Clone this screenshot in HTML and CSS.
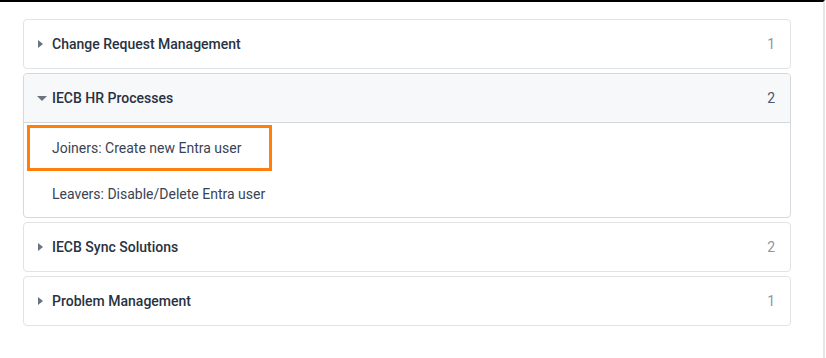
FILE: index.html
```html
<!DOCTYPE html>
<html lang="en">
<head>
    <meta charset="UTF-8">
    <meta name="viewport" content="width=device-width, initial-scale=1.0">
    <title>Service Catalog</title>
    <link rel="stylesheet" href="styles.css">
</head>
<body>
    <div class="frame">
        <div class="catalog">
            <div class="group">
                <div class="group-head">
                    <span class="caret caret-right"></span>
                    <span class="group-title">Change Request Management</span>
                    <span class="count">1</span>
                </div>
            </div>

            <div class="group open">
                <div class="group-head">
                    <span class="caret caret-down"></span>
                    <span class="group-title">IECB HR Processes</span>
                    <span class="count">2</span>
                </div>
                <div class="group-body">
                    <a class="item selected" href="#">Joiners: Create new Entra user</a>
                    <a class="item" href="#">Leavers: Disable/Delete Entra user</a>
                </div>
            </div>

            <div class="group">
                <div class="group-head">
                    <span class="caret caret-right"></span>
                    <span class="group-title">IECB Sync Solutions</span>
                    <span class="count">2</span>
                </div>
            </div>

            <div class="group">
                <div class="group-head">
                    <span class="caret caret-right"></span>
                    <span class="group-title">Problem Management</span>
                    <span class="count">1</span>
                </div>
            </div>
        </div>
    </div>
</body>
</html>
```

FILE: styles.css
```css
body {
    margin: 0;
    padding: 0;
    font-family: Roboto, "Liberation Sans", sans-serif;
    background-color: #fff;
    color: #2b3443;
}
.frame {
    height: 356px;
    border-top: 2px solid #000;
    border-right: 2px solid #e6e6e6;
    margin-right: 1px;
    padding: 17px 0 0 23px;
}
.catalog {
    width: 768px;
    display: flex;
    flex-direction: column;
    gap: 4px;
}
.group {
    border: 1px solid #e1e3e7;
    border-radius: 4px;
    background-color: #fff;
}
.group.open {
    border-color: #d5d8dd;
}
.group-head {
    display: flex;
    align-items: center;
    height: 48px;
    padding: 0 15px 0 13px;
}
.open .group-head {
    background-color: #f7f8fa;
    border-bottom: 1px solid #d5d8dd;
    border-radius: 4px 4px 0 0;
}
.caret {
    width: 0;
    height: 0;
}
.caret-right {
    border-top: 4px solid transparent;
    border-bottom: 4px solid transparent;
    border-left: 5px solid #6b7280;
    margin-left: 1px;
    margin-right: 9px;
}
.caret-down {
    border-left: 5px solid transparent;
    border-right: 5px solid transparent;
    border-top: 5px solid #6b7280;
    margin-right: 5px;
}
.group-title {
    flex: 1;
    font-size: 14px;
    font-weight: 500;
    color: #283242;
}
.count {
    font-size: 14px;
    color: #8c96a6;
}
.open .count {
    color: #4b5563;
}
.group-body {
    display: flex;
    flex-direction: column;
    align-items: flex-start;
    padding: 2px 0 0 3px;
}
.item {
    display: block;
    box-sizing: border-box;
    height: 46px;
    line-height: 46px;
    padding-left: 25px;
    font-size: 14px;
    color: #3a4354;
    text-decoration: none;
    white-space: nowrap;
}
.item.selected {
    width: 245px;
    padding-left: 22px;
    line-height: 40px;
    border: 3px solid #ff7f0a;
}
```
